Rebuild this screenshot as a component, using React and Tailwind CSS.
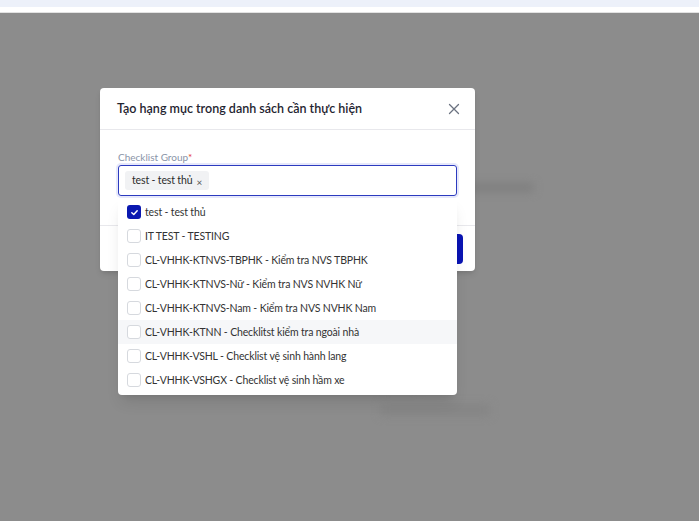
import React from 'react';

const options = [
  'test - test thủ',
  'IT TEST - TESTING',
  'CL-VHHK-KTNVS-TBPHK - Kiểm tra NVS TBPHK',
  'CL-VHHK-KTNVS-Nữ - Kiểm tra NVS NVHK Nữ',
  'CL-VHHK-KTNVS-Nam - Kiểm tra NVS NVHK Nam',
  'CL-VHHK-KTNN - Checklitst kiểm tra ngoài nhà',
  'CL-VHHK-VSHL - Checklist vệ sinh hành lang',
  'CL-VHHK-VSHGX - Checklist vệ sinh hầm xe',
];

const App = () => {
  return (
    <div className="min-h-screen flex flex-col bg-[#8c8c8c]" style={{ fontFamily: 'Lato, "Noto Sans", sans-serif' }}>
      {/* Top strip */}
      <div className="h-[7px] bg-[#edf1fa]" />
      <div className="h-[6px] bg-white border-b border-[#e2e2e2]" />

      {/* Dimmed page */}
      <div className="relative flex-1 h-[507px] overflow-hidden">
        {/* blurred page content behind overlay */}
        <div className="flex flex-col pl-[380px] pt-[170px] gap-[190px] blur-[4px]">
          <div className="ml-[88px] w-[66px] h-[9px] bg-[#7f7f7f] rounded" />
          <div className="flex flex-col gap-[14px]">
            <div className="w-[40px] h-[8px] bg-[#838383] rounded" />
            <div className="w-[110px] h-[12px] bg-[#858585] rounded" />
          </div>
        </div>

        {/* Modal */}
        <div className="absolute left-[100px] top-[75px] w-[375px] bg-white rounded-[4px] shadow-md">
          <div className="h-[42px] flex items-center justify-between pl-[17px] pr-[15px] border-b border-[#e8e8ec]">
            <span className="text-[12.5px] font-semibold text-[#1f2430] mt-[2px]">Tạo hạng mục trong danh sách cần thực hiện</span>
            <svg width="12" height="12" viewBox="0 0 12 12" fill="none" stroke="#6b7280" strokeWidth="1.3" strokeLinecap="round">
              <path d="M1.5 1.5 L10.5 10.5 M10.5 1.5 L1.5 10.5" />
            </svg>
          </div>
          <div className="px-[18px] pt-[21px] pb-[29px]">
            <div className="text-[10px] leading-[12px] text-[#8a94a8] mb-[2px]">
              Checklist Group<span className="text-[#e53935]">*</span>
            </div>
            <div className="h-[31px] border border-[#2c3bbf] rounded-[3px] ring-2 ring-[#e6e8fb] flex items-center px-[6px]">
              <span className="flex items-center h-[19px] px-[7px] bg-[#f1f2f4] rounded-[3px] text-[10.5px] tracking-[-0.15px] text-[#2b2b2b]">
                test - test thủ
                <span className="ml-[4px] text-[10px] text-[#555] leading-none mt-[2px]">×</span>
              </span>
            </div>
          </div>
          <div className="border-t border-[#e8e8ec] h-[46px] flex items-center justify-end pr-[12px]">
            <button className="w-[90px] h-[30px] rounded-[4px] bg-[#0a14b4]" />
          </div>
        </div>

        {/* Dropdown */}
        <div className="absolute left-[118px] top-[185px] w-[339px] bg-white rounded-[4px] shadow-lg pt-[2px] pb-[3px]">
          {options.map((opt, i) => (
            <div
              key={i}
              className={`h-[24px] flex items-center pl-[9px] gap-[4px] text-[10.5px] tracking-[-0.15px] text-[#333] ${i === 5 ? 'bg-[#f6f7f9]' : ''}`}
            >
              {i === 0 ? (
                <span className="w-[14px] h-[14px] rounded-[3px] bg-[#0a18b0] flex items-center justify-center">
                  <svg width="9" height="9" viewBox="0 0 10 10" fill="none" stroke="white" strokeWidth="1.6" strokeLinecap="round" strokeLinejoin="round">
                    <path d="M2 5.2 L4.2 7.3 L8 3" />
                  </svg>
                </span>
              ) : (
                <span className="w-[14px] h-[14px] rounded-[3px] border border-[#d6d9de] bg-white" />
              )}
              <span className="mt-[1px]">{opt}</span>
            </div>
          ))}
        </div>
      </div>
    </div>
  );
};

export default App;
